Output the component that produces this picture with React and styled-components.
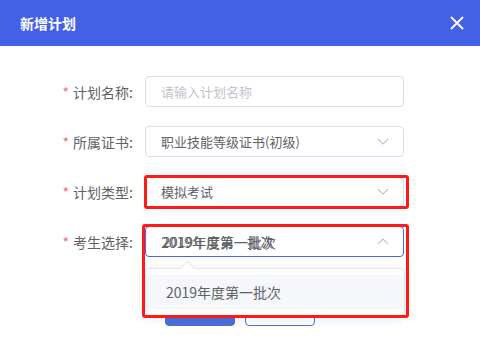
import React from "react";
import styled, { createGlobalStyle } from "styled-components";

const Global = createGlobalStyle`
  html, body { margin: 0; padding: 0; background: #fff; }
  body { font-family: "Noto Sans CJK SC", "Noto Sans", "Liberation Sans", sans-serif; }
  * { box-sizing: border-box; }
`;

const Dialog = styled.div`
  width: 480px;
  height: 357px;
  background: #fff;
  overflow: hidden;
`;

const Header = styled.div`
  height: 46px;
  background: #4361e6;
  display: flex;
  align-items: center;
  justify-content: space-between;
  padding: 0 15px 0 20px;
`;

const Title = styled.div`
  color: #fff;
  font-size: 14px;
  font-weight: 700;
  line-height: 1;
`;

const Close = styled.button`
  border: 0;
  background: transparent;
  padding: 0;
  width: 16px;
  height: 16px;
  display: flex;
  align-items: center;
  justify-content: center;
`;

const Form = styled.div`
  padding-top: 30px;
  display: flex;
  flex-direction: column;
  gap: 18px;
`;

const Row = styled.div`
  display: flex;
  align-items: center;
  height: 32px;
`;

const Label = styled.div`
  width: 133px;
  margin-right: 12px;
  text-align: right;
  font-size: 14px;
  color: #606266;
  line-height: 32px;
  white-space: nowrap;
`;

const Star = styled.span`
  color: #f56c6c;
  margin-right: 4px;
`;

const Field = styled.div`
  position: relative;
  width: 259px;
  height: 32px;
`;

const Box = styled.div`
  width: 100%;
  height: 31px;
  border: 1px solid ${(p) => (p.$focus ? "#4169e1" : "#dcdfe6")};
  border-radius: 4px;
  display: flex;
  align-items: center;
  padding: 0 14px 0 15px;
  font-size: 13px;
  color: ${(p) => (p.$placeholder ? "#c0c4cc" : "#606266")};
  background: #fff;
  position: relative;
`;

const Value = styled.span`
  flex: 1;
  white-space: nowrap;
  position: relative;
`;

const Ghost = styled.span`
  position: absolute;
  left: 2px;
  top: 0;
  font-size: 13px;
  letter-spacing: 0.4px;
  white-space: nowrap;
  color: #606266;
`;

const Mark = styled.div`
  position: absolute;
  top: ${(p) => p.$top}px;
  left: ${(p) => p.$left}px;
  width: ${(p) => p.$w}px;
  height: ${(p) => p.$h}px;
  border: 3px solid #ff1a1a;
  border-radius: 3px;
  pointer-events: none;
  z-index: 5;
`;

const Menu = styled.div`
  position: absolute;
  top: 42px;
  left: 0;
  width: 260px;
  background: #fff;
  border: 1px solid #e4e7ed;
  border-radius: 4px;
  box-shadow: 0 2px 12px rgba(0, 0, 0, 0.1);
  padding: 6px 0;
  z-index: 4;

  &::before {
    content: "";
    position: absolute;
    top: -6px;
    left: 36px;
    width: 10px;
    height: 10px;
    background: #fff;
    border-left: 1px solid #e4e7ed;
    border-top: 1px solid #e4e7ed;
    transform: rotate(45deg);
  }
`;

const Item = styled.div`
  height: 34px;
  line-height: 34px;
  padding: 0 20px;
  background: #f5f7fa;
  font-size: 14px;
  color: #606266;
  position: relative;
`;

const Buttons = styled.div`
  display: flex;
  gap: 10px;
  padding-left: 165px;
  margin-top: 36px;
`;

const Btn = styled.button`
  width: 70px;
  height: 32px;
  border-radius: 4px;
  border: 1px solid #4a6fdc;
  background: ${(p) => (p.$primary ? "#4a6fdc" : "#fff")};
  color: ${(p) => (p.$primary ? "#fff" : "#4a6fdc")};
  font-size: 13px;
  font-family: inherit;
`;

const Chevron = ({ up }) => (
  <svg width="12" height="7" viewBox="0 0 12 7" style={{ flex: "none" }}>
    <path
      d={up ? "M1 6 L6 1 L11 6" : "M1 1 L6 6 L11 1"}
      fill="none"
      stroke="#c0c4cc"
      strokeWidth="1.1"
    />
  </svg>
);

export default function App() {
  return (
    <>
      <Global />
      <Dialog>
        <Header>
          <Title>新增计划</Title>
          <Close aria-label="close">
            <svg width="14" height="14" viewBox="0 0 14 14">
              <path d="M1 1 L13 13 M13 1 L1 13" stroke="#fff" strokeWidth="1.8" />
            </svg>
          </Close>
        </Header>
        <Form>
          <Row>
            <Label><Star>*</Star>计划名称:</Label>
            <Field>
              <Box $placeholder><Value>请输入计划名称</Value></Box>
            </Field>
          </Row>
          <Row>
            <Label><Star>*</Star>所属证书:</Label>
            <Field>
              <Box><Value>职业技能等级证书(初级)</Value><Chevron /></Box>
            </Field>
          </Row>
          <Row>
            <Label><Star>*</Star>计划类型:</Label>
            <Field>
              <Box><Value>模拟考试</Value><Chevron /></Box>
              <Mark $top={-1} $left={-1} $w={265} $h={34} />
            </Field>
          </Row>
          <Row>
            <Label><Star>*</Star>考生选择:</Label>
            <Field>
              <Box $focus>
                <Value style={{ fontSize: 14 }}>
                  2019年度第一批次
                  <Ghost>2019年度第一批次</Ghost>
                </Value>
                <Chevron up />
              </Box>
              <Menu>
                <Item>2019年度第一批次</Item>
              </Menu>
              <Mark $top={-2} $left={-3} $w={267} $h={94} />
            </Field>
          </Row>
        </Form>
        <Buttons>
          <Btn $primary>确定</Btn>
          <Btn>取消</Btn>
        </Buttons>
      </Dialog>
    </>
  );
}
